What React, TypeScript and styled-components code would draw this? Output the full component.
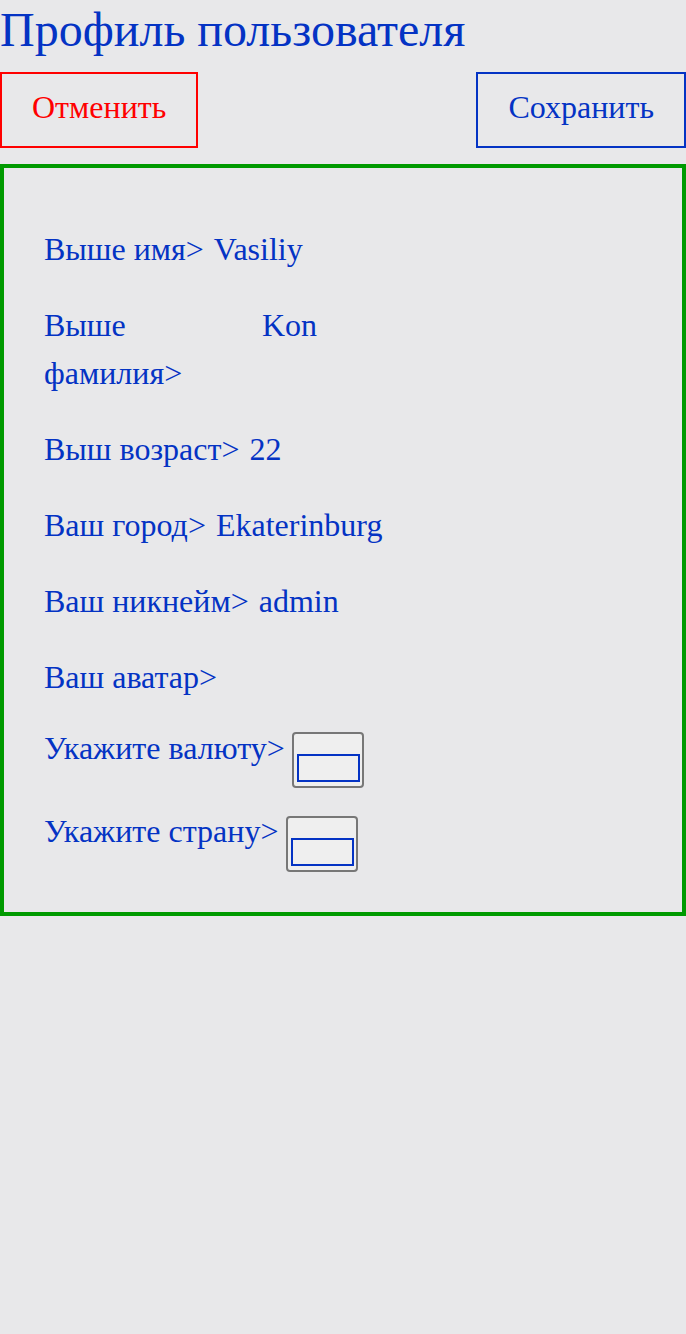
import styled, { createGlobalStyle } from "styled-components";

const GlobalStyle = createGlobalStyle`
  html, body {
    margin: 0;
    padding: 0;
    background: #e8e8ea;
  }
  body {
    font-family: "Liberation Serif", "Times New Roman", serif;
    color: #0433c4;
  }
`;

type Field = { label: string; value: string };

const fields: Field[] = [
  { label: "Выше имя>", value: "Vasiliy" },
  { label: "Выше фамилия>", value: "Kon" },
  { label: "Выш возраст>", value: "22" },
  { label: "Ваш город>", value: "Ekaterinburg" },
  { label: "Ваш никнейм>", value: "admin" },
  { label: "Ваш аватар>", value: "" },
];

export default function App() {
  return (
    <Page>
      <GlobalStyle />
      <Title>Профиль пользователя</Title>
      <Toolbar>
        <ActionButton $color="#ff0000">Отменить</ActionButton>
        <ActionButton $color="#0433c4">Сохранить</ActionButton>
      </Toolbar>
      <Card>
        {fields.map((f) => (
          <Row key={f.label}>
            <Label>{f.label}</Label>
            {f.value && <Value>{f.value}</Value>}
          </Row>
        ))}
        <SelectRow $offset={-7} $gap={7}>
          <SelectLabel $shift={2}>Укажите валюту&gt;</SelectLabel>
          <FakeSelect>
            <SelectInner />
          </FakeSelect>
        </SelectRow>
        <SelectRow $offset={-10} $gap={8}>
          <SelectLabel $shift={1}>Укажите страну&gt;</SelectLabel>
          <FakeSelect>
            <SelectInner />
          </FakeSelect>
        </SelectRow>
      </Card>
    </Page>
  );
}

const Page = styled.div`
  width: 686px;
  display: flex;
  flex-direction: column;
`;

const Title = styled.h1`
  margin: 0;
  padding-top: 2px;
  font-size: 48px;
  font-weight: normal;
  line-height: 56px;
  color: #0433c4;
`;

const Toolbar = styled.div`
  display: flex;
  justify-content: space-between;
  margin-top: 14px;
`;

const ActionButton = styled.button<{ $color: string }>`
  box-sizing: border-box;
  height: 76px;
  padding: 0 30px 6px;
  border: 2px solid ${(p) => p.$color};
  background: transparent;
  color: ${(p) => p.$color};
  font-family: "Liberation Serif", "Times New Roman", serif;
  font-size: 32px;
`;

const Card = styled.div`
  box-sizing: border-box;
  margin-top: 16px;
  border: 4px solid #009a00;
  padding: 57px 40px 40px;
  display: flex;
  flex-direction: column;
  gap: 28px;
`;

const Row = styled.div`
  display: flex;
  align-items: flex-start;
  gap: 10px;
  font-size: 32px;
  line-height: 48px;
`;

const Label = styled.span`
  max-width: 208px;
`;

const Value = styled.span``;

const SelectRow = styled.div<{ $offset: number; $gap: number }>`
  display: flex;
  align-items: flex-start;
  gap: ${(p) => p.$gap}px;
  font-size: 32px;
  line-height: 48px;
  margin-top: ${(p) => p.$offset}px;
`;

const SelectLabel = styled.span<{ $shift: number }>`
  padding-top: ${(p) => p.$shift}px;
`;

const FakeSelect = styled.div`
  box-sizing: border-box;
  width: 72px;
  height: 56px;
  margin-top: 10px;
  border: 2px solid #777;
  border-radius: 4px;
  background: #efefef;
  display: flex;
  align-items: flex-end;
  padding: 4px 2px 4px 3px;
`;

const SelectInner = styled.div`
  box-sizing: border-box;
  width: 100%;
  height: 28px;
  border: 2px solid #0433c4;
`;
